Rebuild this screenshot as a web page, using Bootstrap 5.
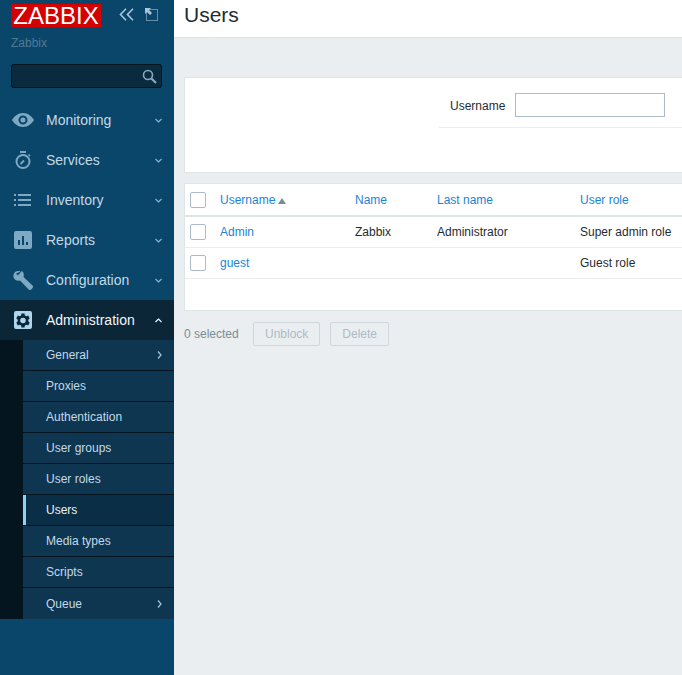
<!DOCTYPE html>
<html lang="en">
<head>
  <meta charset="UTF-8">
  <meta name="viewport" content="width=device-width, initial-scale=1.0">
  <title>Users | Zabbix</title>
  <link href="https://cdn.jsdelivr.net/npm/bootstrap@5.3.0/dist/css/bootstrap.min.css" rel="stylesheet">
  <style>
    html, body {
      height: 100%;
    }
    body {
      background-color: #ebeef0;
      font-family: "Liberation Sans", Arial, sans-serif;
      font-size: 12px;
      color: #1f2c33;
      overflow: hidden;
    }
    .side-panel {
      width: 174px;
      flex: 0 0 174px;
      min-height: 675px;
      background-color: #0a466a;
    }
    .brand-row {
      height: 36px;
      padding: 4px 0 0 11px;
    }
    .brand-logo {
      width: 90px;
      height: 23px;
      line-height: 23px;
      background-color: #d40000;
      color: #fff;
      font-size: 24px;
      text-align: center;
      text-decoration: none;
    }
    .brand-tools {
      margin-left: 18px;
      margin-top: 4px;
      gap: 11px;
    }
    .server-name {
      color: #4f7a96;
      padding-left: 11px;
      height: 28px;
      line-height: 14px;
    }
    .search-box {
      margin-left: 11px;
      width: 151px;
      height: 24px;
      background-color: #0a2a3d;
      border: 1px solid #04151f;
      border-radius: 2px;
      padding-right: 4px;
    }
    .menu-list {
      margin-top: 12px;
    }
    .menu-item {
      height: 40px;
      padding-left: 12px;
      padding-right: 12px;
      color: #c3d9e8;
      font-size: 14px;
      text-decoration: none;
    }
    .menu-item.is-open {
      background-color: #0a2637;
      color: #f2f7fa;
    }
    .menu-icon {
      width: 22px;
      height: 22px;
      margin-right: 12px;
      flex: none;
    }
    .sub-wrap {
      padding-left: 23px;
      background-color: #04151f;
    }
    .sub-item {
      height: 31px;
      padding-left: 23px;
      padding-right: 12px;
      background-color: #0e3651;
      border-bottom: 1px solid #04151f;
      color: #c3d9e8;
      text-decoration: none;
    }
    .sub-item:last-child {
      border-bottom: 0;
    }
    .sub-item.is-current {
      background-color: #0a2e46;
      box-shadow: inset 3px 0 0 #8fd0f5;
      color: #e6f1f8;
    }
    .main-area {
      min-width: 0;
      overflow: hidden;
    }
    .page-head {
      height: 38px;
      background-color: #fff;
      border-bottom: 1px solid #dfe4e7;
      padding-left: 10px;
    }
    .page-head h1 {
      font-size: 21px;
      font-weight: 400;
      line-height: 30px;
      color: #1f2c33;
      margin: 0;
    }
    .content-wrap {
      width: 530px;
      padding: 39px 0 0 10px;
    }
    .filter-box {
      height: 96px;
      background-color: #fff;
      border: 1px solid #dfe4e7;
      margin-bottom: 10px;
    }
    .filter-side {
      margin-left: 254px;
      height: 50px;
      border-bottom: 1px solid #ebeef0;
      padding: 15px 0 0 11px;
    }
    .filter-side label {
      color: #1f2c33;
      margin-right: 10px;
    }
    .filter-input {
      width: 150px;
      height: 24px;
      border: 1px solid #acbbc7;
      background: #fff;
    }
    .users-box {
      height: 128px;
      background-color: #fff;
      border: 1px solid #dfe4e7;
    }
    .users-table {
      width: 100%;
      margin: 0;
      table-layout: fixed;
      font-size: 12px;
      --bs-table-color: #1f2c33;
      --bs-table-border-color: #ebeef0;
    }
    .users-table th, .users-table td {
      height: 31px;
      padding: 0 5px;
      vertical-align: middle;
      font-weight: 400;
      white-space: nowrap;
    }
    .users-table thead th {
      height: 32px;
      border-bottom: 2px solid #dfe4e7;
    }
    .users-table a {
      color: #1c83d4;
      text-decoration: none;
    }
    .col-check { width: 30px; }
    .col-user { width: 135px; }
    .col-name { width: 82px; }
    .col-last { width: 143px; }
    .tick-box {
      display: block;
      width: 16px;
      height: 16px;
      border: 1px solid #acbbc7;
      border-radius: 2px;
      background-color: #fff;
    }
    .sort-mark {
      display: inline-block;
      width: 0;
      height: 0;
      margin-left: 3px;
      border-left: 4px solid transparent;
      border-right: 4px solid transparent;
      border-bottom: 6px solid #768d99;
    }
    .action-row {
      padding-top: 11px;
      gap: 10px;
      color: #768d99;
    }
    .action-row .selected-count {
      width: 59px;
    }
    .action-btn {
      height: 24px;
      padding: 0 11px;
      font-size: 12px;
      color: #acbbc7;
      background-color: #ebeef0;
      border: 1px solid #d0d7dc;
      border-radius: 2px;
      opacity: 1;
    }
  </style>
</head>
<body class="d-flex">
  <aside class="side-panel">
    <div class="brand-row d-flex align-items-start">
      <a class="brand-logo d-block" href="#">ZABBIX</a>
      <div class="brand-tools d-flex align-items-center">
        <svg width="15" height="13" viewBox="0 0 15 13" fill="none" stroke="#a9c6d9" stroke-width="1.6"><path d="M7 .8 1.5 6.5 7 12.2M14 .8 8.500 6.500 14 12.200"/></svg>
        <svg width="13" height="13" viewBox="0 0 13 13"><rect x="1.500" y="1.500" width="11" height="11" fill="none" stroke="#c3d9e8" stroke-dasharray="1 1"/><path d="M0 0h6L4 2l3 3-2 2-3-3-2 2z" fill="#a9c6d9"/></svg>
      </div>
    </div>
    <div class="server-name">Zabbix</div>
    <div class="search-box d-flex align-items-center justify-content-end">
      <svg width="15" height="15" viewBox="0 0 15 15" fill="none" stroke="#8aa9bd"><circle cx="6" cy="6" r="4.500" stroke-width="1.600"/><path d="m9.500 9.500 4.500 4.500" stroke-width="2.200"/></svg>
    </div>

    <nav class="menu-list">
      <a class="menu-item d-flex align-items-center" href="#">
        <svg class="menu-icon" viewBox="0 0 22 22"><path fill="#7ea9c4" fill-rule="evenodd" d="M11 4c5 0 9 3.500 11 7-2 3.500-6 7-11 7S2 14.500 0 11c2-3.500 6-7 11-7zm0 2.500a4.500 4.500 0 1 0 0 9 4.500 4.500 0 0 0 0-9zm0 2a2.500 2.500 0 1 1 0 5 2.500 2.500 0 0 1 0-5z"/></svg>
        <span class="flex-grow-1">Monitoring</span>
        <svg width="7" height="5" viewBox="0 0 7 5" fill="none" stroke="#8fb3ca" stroke-width="1.200"><path d="m.5 1 3 3 3-3"/></svg>
      </a>
      <a class="menu-item d-flex align-items-center" href="#">
        <svg class="menu-icon" viewBox="0 0 22 22" fill="none" stroke="#7ea9c4"><circle cx="11" cy="12.500" r="6.500" stroke-width="2"/><path d="M8 3h6" stroke-width="2"/><path d="m8.500 15 3.500-3.500" stroke-width="1.800"/><path d="m16.500 5.500 1.500 1.500" stroke-width="1.600"/></svg>
        <span class="flex-grow-1">Services</span>
        <svg width="7" height="5" viewBox="0 0 7 5" fill="none" stroke="#8fb3ca" stroke-width="1.200"><path d="m.5 1 3 3 3-3"/></svg>
      </a>
      <a class="menu-item d-flex align-items-center" href="#">
        <svg class="menu-icon" viewBox="0 0 22 22" fill="#7ea9c4"><path d="M2 5h2v2H2zM6 5h13v2H6zM2 10h2v2H2zM6 10h13v2H6zM2 15h2v2H2zM6 15h13v2H6z"/></svg>
        <span class="flex-grow-1">Inventory</span>
        <svg width="7" height="5" viewBox="0 0 7 5" fill="none" stroke="#8fb3ca" stroke-width="1.200"><path d="m.5 1 3 3 3-3"/></svg>
      </a>
      <a class="menu-item d-flex align-items-center" href="#">
        <svg class="menu-icon" viewBox="0 0 22 22"><path fill="#7ea9c4" fill-rule="evenodd" d="M4 2h14a2 2 0 0 1 2 2v14a2 2 0 0 1-2 2H4a2 2 0 0 1-2-2V4a2 2 0 0 1 2-2zm2 9v5h2v-5zm4-4v9h2V7zm4 6v3h2v-3z"/></svg>
        <span class="flex-grow-1">Reports</span>
        <svg width="7" height="5" viewBox="0 0 7 5" fill="none" stroke="#8fb3ca" stroke-width="1.200"><path d="m.5 1 3 3 3-3"/></svg>
      </a>
      <a class="menu-item d-flex align-items-center" href="#">
        <svg class="menu-icon" viewBox="0 0 22 22"><path fill="#7ea9c4" d="M8.500 2.500c-2-.8-4.400-.4-5.800 1.100C1.400 5 1 7.100 1.800 8.900c1.200 2.400 3.800 3.300 6.200 2.500l8.700 9c.7.700 1.800.7 2.500 0l1.300-1.300c.7-.7.700-1.800 0-2.500l-9-8.700c.8-2.200.2-4.700-1.600-5.900L6 6.200 3.900 4.700z"/></svg>
        <span class="flex-grow-1">Configuration</span>
        <svg width="7" height="5" viewBox="0 0 7 5" fill="none" stroke="#8fb3ca" stroke-width="1.200"><path d="m.5 1 3 3 3-3"/></svg>
      </a>
      <a class="menu-item is-open d-flex align-items-center" href="#">
        <svg class="menu-icon" viewBox="0 0 22 22"><path fill="#b0d5ee" fill-rule="evenodd" d="M4 2h14a2 2 0 0 1 2 2v14a2 2 0 0 1-2 2H4a2 2 0 0 1-2-2V4a2 2 0 0 1 2-2zm5.500 2.500-.4 2-1.400.8-1.900-.7L4.300 9.400l1.500 1.300v1.600l-1.500 1.300 1.500 2.800 1.900-.7 1.400.8.400 2h3l.4-2 1.400-.8 1.900.7 1.500-2.800-1.500-1.300v-1.600l1.500-1.300-1.500-2.800-1.900.7-1.400-.8-.4-2zM11 8.700a2.800 2.800 0 1 1 0 5.600 2.800 2.800 0 0 1 0-5.600z"/></svg>
        <span class="flex-grow-1">Administration</span>
        <svg width="7" height="5" viewBox="0 0 7 5" fill="none" stroke="#f2f7fa" stroke-width="1.200"><path d="m.5 4 3-3 3 3"/></svg>
      </a>
      <div class="sub-wrap">
        <a class="sub-item d-flex align-items-center justify-content-between" href="#">General
          <svg width="5" height="8" viewBox="0 0 5 8" fill="none" stroke="#a9c6d9" stroke-width="1.200"><path d="m1 .5 3 3.500-3 3.500"/></svg>
        </a>
        <a class="sub-item d-flex align-items-center" href="#">Proxies</a>
        <a class="sub-item d-flex align-items-center" href="#">Authentication</a>
        <a class="sub-item d-flex align-items-center" href="#">User groups</a>
        <a class="sub-item d-flex align-items-center" href="#">User roles</a>
        <a class="sub-item is-current d-flex align-items-center" href="#">Users</a>
        <a class="sub-item d-flex align-items-center" href="#">Media types</a>
        <a class="sub-item d-flex align-items-center" href="#">Scripts</a>
        <a class="sub-item d-flex align-items-center justify-content-between" href="#">Queue
          <svg width="5" height="8" viewBox="0 0 5 8" fill="none" stroke="#a9c6d9" stroke-width="1.200"><path d="m1 .5 3 3.500-3 3.500"/></svg>
        </a>
      </div>
    </nav>
  </aside>

  <main class="main-area flex-grow-1">
    <header class="page-head">
      <h1>Users</h1>
    </header>
    <div class="content-wrap">
      <div class="filter-box">
        <div class="filter-side d-flex align-items-start">
          <label class="lh-base pt-1" for="filter-username">Username</label>
          <input class="filter-input" id="filter-username" type="text">
        </div>
      </div>
      <div class="users-box">
        <table class="table users-table">
          <colgroup>
            <col class="col-check"><col class="col-user"><col class="col-name"><col class="col-last"><col>
          </colgroup>
          <thead>
            <tr>
              <th><span class="tick-box"></span></th>
              <th><a href="#">Username</a><span class="sort-mark"></span></th>
              <th><a href="#">Name</a></th>
              <th><a href="#">Last name</a></th>
              <th><a href="#">User role</a></th>
            </tr>
          </thead>
          <tbody>
            <tr>
              <td><span class="tick-box"></span></td>
              <td><a href="#">Admin</a></td>
              <td>Zabbix</td>
              <td>Administrator</td>
              <td>Super admin role</td>
            </tr>
            <tr>
              <td><span class="tick-box"></span></td>
              <td><a href="#">guest</a></td>
              <td></td>
              <td></td>
              <td>Guest role</td>
            </tr>
          </tbody>
        </table>
      </div>
      <div class="action-row d-flex align-items-center">
        <span class="selected-count">0 selected</span>
        <button class="action-btn" type="button" disabled>Unblock</button>
        <button class="action-btn" type="button" disabled>Delete</button>
      </div>
    </div>
  </main>
  <script src="https://cdn.jsdelivr.net/npm/bootstrap@5.3.0/dist/js/bootstrap.bundle.min.js"></script>
</body>
</html>
